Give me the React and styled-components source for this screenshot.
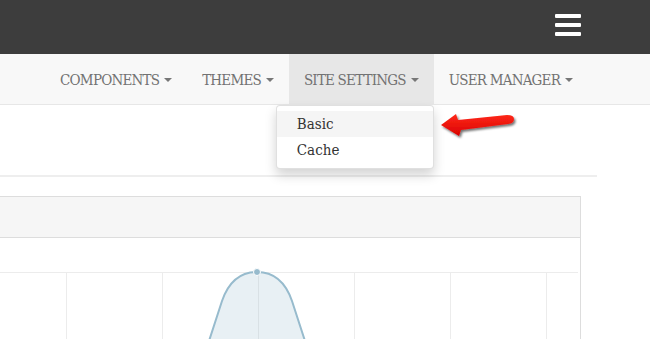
import React from "react";
import styled, { createGlobalStyle } from "styled-components";

const GlobalStyle = createGlobalStyle`
  html, body {
    margin: 0;
    padding: 0;
    background: #fff;
    overflow: hidden;
  }
  body {
    font-family: "DejaVu Serif Condensed", "Liberation Serif", serif;
  }
`;

const Page = styled.div`
  width: 650px;
  height: 339px;
  overflow: hidden;
`;

const TopBar = styled.div`
  height: 54px;
  background: #3d3d3d;
  display: flex;
  align-items: center;
  justify-content: flex-end;
  padding-right: 69px;
  box-sizing: border-box;
`;

const MenuButton = styled.button`
  border: 0;
  background: none;
  padding: 0;
  margin-top: -4px;
  display: flex;
  cursor: pointer;
`;

const NavBar = styled.nav`
  height: 51px;
  background: #f8f8f8;
  border-bottom: 1px solid #e7e7e7;
  box-sizing: border-box;
  display: flex;
  justify-content: flex-end;
  padding-right: 62px;
`;

const NavItem = styled.div`
  position: relative;
  display: flex;
  align-items: center;
  padding: 2px 15px 0;
  font-size: 15px;
  letter-spacing: -0.8px;
  color: #727272;
  text-transform: uppercase;
  background: ${(p) => (p.$active ? "#e7e7e7" : "transparent")};
  cursor: pointer;
`;

const Caret = styled.span`
  display: inline-block;
  margin-left: 5px;
  margin-top: -1px;
  border-top: 4px solid #777;
  border-left: 4px solid transparent;
  border-right: 4px solid transparent;
`;

const Dropdown = styled.ul`
  position: absolute;
  top: 100%;
  right: 0;
  width: 158px;
  margin: 1px 0 0;
  padding: 5px 0;
  list-style: none;
  background: #fff;
  border: 1px solid rgba(0, 0, 0, 0.12);
  border-radius: 4px;
  box-shadow: 0 6px 12px rgba(0, 0, 0, 0.175);
  box-sizing: border-box;
  text-transform: none;
  letter-spacing: 0;
  z-index: 5;
`;

const DropItem = styled.li`
  height: 26px;
  line-height: 26px;
  padding: 0 20px;
  font-size: 15px;
  color: #333;
  background: ${(p) => (p.$hover ? "#f5f5f5" : "transparent")};
`;

const Pointer = styled.svg`
  position: absolute;
  left: 100%;
  top: 2px;
  margin-left: 4px;
`;

const Content = styled.main`
  padding-top: 0;
`;

const PageHeader = styled.div`
  width: 597px;
  height: 70px;
  border-bottom: 2px solid #eee;
`;

const Panel = styled.section`
  width: 581px;
  margin-top: 19px;
  border: 1px solid #ddd;
  border-left: 0;
  box-sizing: border-box;
`;

const PanelHeading = styled.div`
  height: 40px;
  background: #f6f6f6;
  border-bottom: 1px solid #ddd;
`;

const PanelBody = styled.div`
  height: 120px;
`;

const Chart = styled.svg`
  display: block;
`;

const gridX = [66, 162, 258, 354, 450, 546];

function App() {
  return (
    <Page>
      <GlobalStyle />
      <TopBar>
        <MenuButton aria-label="Menu">
          <svg width="26" height="22" viewBox="0 0 26 22">
            <rect x="0" y="0" width="26" height="4" rx="1" fill="#fff" />
            <rect x="0" y="9" width="26" height="4" rx="1" fill="#fff" />
            <rect x="0" y="18" width="26" height="4" rx="1" fill="#fff" />
          </svg>
        </MenuButton>
      </TopBar>
      <NavBar>
        <NavItem>
          Components<Caret />
        </NavItem>
        <NavItem>
          Themes<Caret />
        </NavItem>
        <NavItem $active>
          Site Settings<Caret />
          <Dropdown>
            <DropItem $hover>Basic</DropItem>
            <DropItem>Cache</DropItem>
            <Pointer width="82" height="32" viewBox="0 0 82 32">
              <defs>
                <filter id="arrowShadow" x="-10%" y="-30%" width="130%" height="170%">
                  <feDropShadow dx="1.5" dy="2" stdDeviation="1.2" floodColor="#000" floodOpacity="0.55" />
                </filter>
                <linearGradient id="arrowFill" x1="0" y1="0" x2="0" y2="1">
                  <stop offset="0" stopColor="#ff2a1a" />
                  <stop offset="1" stopColor="#d90000" />
                </linearGradient>
              </defs>
              <path
                d="M4 17 L19 6 L21 12 L70 7 Q77 7 77 11 Q77 15.5 71 16 L24 22 L22 28 Z"
                fill="url(#arrowFill)"
                filter="url(#arrowShadow)"
              />
            </Pointer>
          </Dropdown>
        </NavItem>
        <NavItem>
          User Manager<Caret />
        </NavItem>
      </NavBar>
      <Content>
        <PageHeader />
        <Panel>
          <PanelHeading />
          <PanelBody>
            <Chart width="580" height="120" viewBox="0 0 580 120">
              <line x1="0" y1="34.5" x2="578" y2="34.5" stroke="#ececec" />
              {gridX.map((x) => (
                <line key={x} x1={x + 0.5} y1="34" x2={x + 0.5} y2="120" stroke="#ececec" />
              ))}
              <path
                d="M184 180 L222 63 Q232 34 257 34 Q282 34 292 63 L330 180 Z"
                fill="rgba(151,187,205,0.22)"
              />
              <path
                d="M184 180 L222 63 Q232 34 257 34 Q282 34 292 63 L330 180"
                fill="none"
                stroke="rgba(151,187,205,1)"
                strokeWidth="2"
              />
              <circle cx="257" cy="34" r="3.5" fill="rgba(151,187,205,1)" stroke="#fff" strokeWidth="1" />
            </Chart>
          </PanelBody>
        </Panel>
      </Content>
    </Page>
  );
}

export default App;
